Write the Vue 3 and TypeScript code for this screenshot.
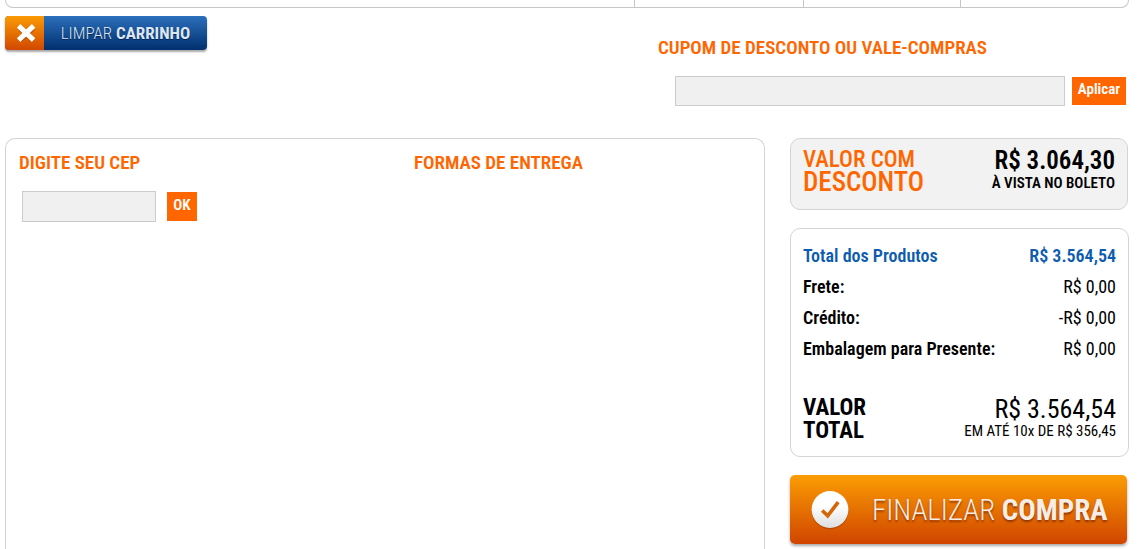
<script setup lang="ts">
import { ref } from 'vue'

interface SummaryLine {
  label: string
  value: string
  highlight?: boolean
}

const coupon = ref('')
const cep = ref('')

const lines: SummaryLine[] = [
  { label: 'Total dos Produtos', value: 'R$ 3.564,54', highlight: true },
  { label: 'Frete:', value: 'R$ 0,00' },
  { label: 'Crédito:', value: '-R$ 0,00' },
  { label: 'Embalagem para Presente:', value: 'R$ 0,00' },
]
</script>

<template>
  <main class="page">
    <div class="items-end">
      <span></span><span></span><span></span><span></span>
    </div>

    <div class="actions">
      <button type="button" class="clear">
        <span class="clear-icon">
          <svg width="22" height="22" viewBox="0 0 22 22" aria-hidden="true">
            <path d="M6 7.4 17 17.4M17 7.4 6 17.4" stroke="#8d3500" stroke-opacity=".45" stroke-width="5" stroke-linecap="round" />
            <path d="M5.4 5.6 16.8 16.4M16.8 5.6 5.4 16.4" stroke="#fff" stroke-width="5" stroke-linecap="square" />
          </svg>
        </span>
        <span class="clear-text">LIMPAR <b>CARRINHO</b></span>
      </button>

      <form class="coupon" @submit.prevent>
        <label class="title" for="coupon">CUPOM DE DESCONTO OU VALE-COMPRAS</label>
        <div class="coupon-row">
          <input id="coupon" v-model="coupon" class="field" type="text" />
          <button type="submit" class="small-button">Aplicar</button>
        </div>
      </form>
    </div>

    <div class="columns">
      <section class="delivery">
        <form class="cep" @submit.prevent>
          <label class="title" for="cep">DIGITE SEU CEP</label>
          <div class="cep-row">
            <input id="cep" v-model="cep" class="field" type="text" />
            <button type="submit" class="small-button">OK</button>
          </div>
        </form>
        <h2 class="title">FORMAS DE ENTREGA</h2>
      </section>

      <aside class="summary">
        <section class="discount">
          <h2 class="discount-title">VALOR COM <span>DESCONTO</span></h2>
          <p class="discount-value"><strong>R$ 3.064,30</strong><span>À VISTA NO BOLETO</span></p>
        </section>

        <section class="totals">
          <dl class="lines">
            <div v-for="line in lines" :key="line.label" class="line" :class="{ highlight: line.highlight }">
              <dt>{{ line.label }}</dt>
              <dd>{{ line.value }}</dd>
            </div>
          </dl>
          <div class="grand">
            <h2>VALOR<br />TOTAL</h2>
            <p><strong>R$ 3.564,54</strong><span>EM ATÉ 10x DE R$ 356,45</span></p>
          </div>
        </section>

        <button type="button" class="checkout">
          <svg width="40" height="42" viewBox="0 0 40 42" aria-hidden="true">
            <defs>
              <linearGradient id="disc" x1="0" y1="0" x2="0" y2="1">
                <stop offset=".4" stop-color="#fff" />
                <stop offset="1" stop-color="#dedede" />
              </linearGradient>
            </defs>
            <circle cx="20" cy="22" r="18.5" fill="#8f3300" opacity=".4" />
            <circle cx="20" cy="20.5" r="18.4" fill="url(#disc)" />
            <path d="M12.2 21.5 17.7 26.8 28.2 13.2" fill="none" stroke="#d36608" stroke-width="3.6" />
          </svg>
          <span>FINALIZAR <b>COMPRA</b></span>
        </button>
      </aside>
    </div>
  </main>
</template>

<style>
body {
  margin: 0;
  background: #fff;
}
</style>

<style scoped>
.page {
  box-sizing: border-box;
  display: flex;
  flex-direction: column;
  min-height: 100vh;
  padding: 0 9px 0 5px;
  color: #000;
  font-family: "Roboto Condensed", "Liberation Sans Narrow", "Arial Narrow", sans-serif;
}

h2,
p,
dl,
dd {
  margin: 0;
}

button,
input {
  box-sizing: border-box;
  font-family: inherit;
}

button {
  border: 0;
  padding: 0;
  cursor: pointer;
}

.items-end {
  box-sizing: border-box;
  display: grid;
  grid-template-columns: 1fr 169px 157px 168px;
  height: 8px;
  border: 1px solid #c6c6c6;
  border-top: 0;
  border-radius: 0 0 10px 10px;
}

.items-end span + span {
  border-left: 1px solid #c6c6c6;
}

.actions {
  display: flex;
  justify-content: space-between;
  align-items: flex-start;
  padding: 8px 3px 32px 0;
}

.clear {
  display: flex;
  width: 202px;
  height: 34px;
  border-radius: 4px;
  overflow: hidden;
  background: linear-gradient(#2c6fbb, #00306f);
  box-shadow: 0 2px 2px #aaa;
  color: #dce6f3;
}

.clear-icon {
  display: flex;
  align-items: center;
  justify-content: center;
  width: 39px;
  height: 34px;
  padding-left: 3px;
  box-sizing: border-box;
  background: linear-gradient(#fb9a04, #d14800);
}

.clear-text {
  flex: 1;
  font-size: 17px;
  font-weight: 300;
  line-height: 34px;
  white-space: nowrap;
  text-shadow: 0 1px 1px #00204f;
}

.clear-text b,
.checkout b {
  font-weight: 700;
}

.coupon {
  width: 468px;
  padding-top: 20px;
}

.title {
  display: block;
  color: #f60;
  font-size: 19px;
  font-weight: 600;
  line-height: 24px;
}

.coupon-row {
  display: flex;
  align-items: center;
  gap: 7px;
  padding: 16px 0 0 17px;
}

.field {
  height: 30px;
  min-width: 0;
  padding: 0 6px;
  border: 1px solid #ccc;
  border-radius: 0;
  background: #f0f0f0;
  font-size: 16px;
}

.coupon-row .field {
  flex: 1;
}

.small-button {
  height: 28px;
  padding: 0 0 4px;
  background: #f60;
  color: #fff;
  font-size: 15px;
  font-weight: 600;
}

.coupon-row .small-button {
  width: 54px;
}

.columns {
  display: flex;
  flex: 1;
  gap: 25px;
}

.delivery {
  box-sizing: border-box;
  display: grid;
  flex: 1;
  grid-template-columns: 395px 1fr;
  align-items: start;
  padding: 12px 12px 0 13px;
  border: 1px solid #d4d4d4;
  border-bottom: 0;
  border-radius: 10px 10px 0 0;
}

.cep-row {
  display: flex;
  align-items: center;
  gap: 11px;
  padding: 16px 0 0 3px;
}

.cep-row .field {
  width: 134px;
  height: 31px;
}

.cep-row .small-button {
  width: 30px;
  height: 29px;
}

.summary {
  display: flex;
  flex-direction: column;
  width: 339px;
}

.discount,
.totals {
  border: 1px solid #d4d4d4;
  border-radius: 10px;
  padding: 0 12px;
}

.discount {
  display: flex;
  justify-content: space-between;
  margin-right: 1px;
  padding-top: 9px;
  padding-bottom: 15px;
  background: #f2f2f2;
}

.discount-title {
  color: #f60;
  font-size: 23px;
  font-weight: 500;
  line-height: 23px;
}

.discount-title span {
  display: block;
  font-size: 27px;
}

.discount-value,
.grand p {
  text-align: right;
}

.discount-value strong,
.grand strong {
  display: block;
  font-size: 26px;
  line-height: 26px;
}

.discount-value strong {
  font-size: 25px;
  font-weight: 600;
}

.discount-value span {
  display: block;
  font-size: 15px;
  font-weight: 600;
  line-height: 18px;
}

.totals {
  margin-top: 18px;
  padding-top: 11px;
  padding-bottom: 14px;
}

.line {
  display: flex;
  justify-content: space-between;
  font-size: 18px;
  line-height: 31px;
}

.line dt,
.highlight {
  font-weight: 600;
}

.highlight {
  color: #0d5cb0;
}

.grand {
  display: flex;
  justify-content: space-between;
  padding-top: 32px;
}

.grand h2 {
  font-size: 23px;
  line-height: 23px;
}

.grand strong {
  font-weight: normal;
}

.grand span {
  display: block;
  font-size: 15px;
  line-height: 18px;
}

.checkout {
  display: flex;
  align-items: center;
  gap: 22px;
  height: 69px;
  margin: 18px 2px 0 0;
  padding-left: 20px;
  border-radius: 5px;
  background: linear-gradient(#fb9d03, #d04500);
  box-shadow: 0 2px 3px #aaa;
  color: #f6eee6;
  font-size: 29px;
  font-weight: 300;
  white-space: nowrap;
  text-shadow: 0 2px 2px #963800;
}
</style>
